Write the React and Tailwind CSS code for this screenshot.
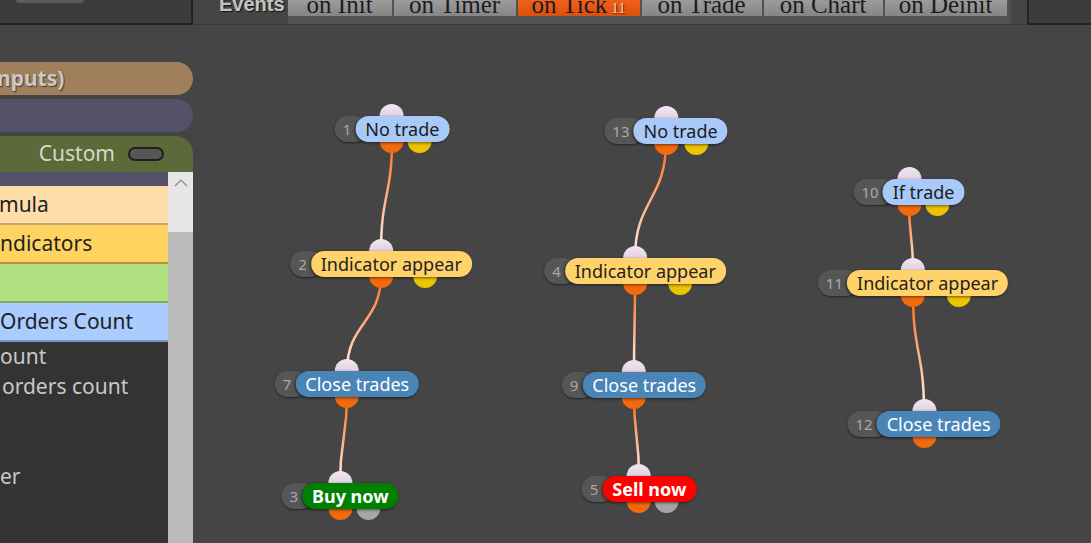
import React from 'react';

// strategy graph: blocks on the event canvas
const nodes = [
    { id: 1, cx: 392, y: 116, label: 'No trade', kind: 'cond', out2: 28 },
    { id: 13, cx: 666, y: 118, label: 'No trade', kind: 'cond', out2: 30 },
    { id: 10, cx: 909, y: 179, label: 'If trade', kind: 'cond', out2: 28 },
    { id: 2, cx: 381, y: 251, label: 'Indicator appear', kind: 'ind', out2: 44 },
    { id: 4, cx: 635, y: 258, label: 'Indicator appear', kind: 'ind', out2: 45 },
    { id: 11, cx: 913, y: 270, label: 'Indicator appear', kind: 'ind', out2: 46 },
    { id: 7, cx: 347, y: 371, label: 'Close trades', kind: 'close' },
    { id: 9, cx: 634, y: 372, label: 'Close trades', kind: 'close' },
    { id: 12, cx: 924, y: 411, label: 'Close trades', kind: 'close' },
    { id: 3, cx: 340, y: 483, label: 'Buy now', kind: 'buy', out2: 28 },
    { id: 5, cx: 639, y: 476, label: 'Sell now', kind: 'sell', out2: 28 },
];

const links = [
    [1, 2], [2, 7], [7, 3],
    [13, 4], [4, 9], [9, 5],
    [10, 11], [11, 12],
];

const labelStyles = {
    cond: 'bg-[#a9c9f9] text-[#1c1c1c]',
    ind: 'bg-[#ffd36a] text-[#222]',
    close: 'bg-[#4a85b8] text-white',
    buy: 'bg-[#008000] text-white font-bold',
    sell: 'bg-[#ff0000] text-white font-bold',
};

const tabs = [
    { name: 'on Init', w: 'w-[104px]' },
    { name: 'on Timer', w: 'w-[122px]' },
    { name: 'on Tick', w: 'w-[122px]', active: true, count: 11 },
    { name: 'on Trade', w: 'w-[120px]' },
    { name: 'on Chart', w: 'w-[119px]' },
    { name: 'on Deinit', w: 'w-[122px]' },
];

const byId = Object.fromEntries(nodes.map((n) => [n.id, n]));

const Node = ({ n }) => {
    const side = n.kind === 'buy' || n.kind === 'sell' ? 'bg-[#a6a6a6]' : 'bg-[#ecc400]';
    return (
        <div className="absolute -translate-x-1/2" style={{ left: n.cx, top: n.y }}>
            <div className="relative flex h-[26px]">
                <span className="absolute left-1/2 -ml-[12px] -top-[12px] w-[24px] h-[24px] rounded-full bg-gradient-to-b from-[#f2e6f2] to-[#d4bed4]" />
                <span className="absolute left-1/2 -ml-[12px] top-[13px] w-[24px] h-[24px] rounded-full bg-[#f36a0c]" />
                {n.out2 && (
                    <span
                        className={`absolute top-[13px] w-[24px] h-[24px] rounded-full ${side}`}
                        style={{ left: `calc(50% + ${n.out2 - 12}px)` }}
                    />
                )}
                <span className="relative flex items-center h-[26px] rounded-full bg-[#565656] pl-[8px] pr-[16px] text-[15px] text-[#a9a9a9] shadow-[0_1px_2px_rgba(0,0,0,0.5)]">
                    {n.id}
                </span>
                <span className={`relative -ml-[12px] flex items-center h-[26px] rounded-full px-[10px] text-[18px] whitespace-nowrap shadow-[-1px_1px_3px_rgba(0,0,0,0.55)] ${labelStyles[n.kind]}`}>
                    {n.label}
                </span>
            </div>
        </div>
    );
};

const Links = () => (
    <svg className="absolute left-0 top-0 pointer-events-none" width="1091" height="543">
        <defs>
            {links.map(([a, b]) => {
                const y1 = byId[a].y + 24;
                const y2 = byId[b].y;
                return (
                    <linearGradient key={`g${a}`} id={`link${a}`} gradientUnits="userSpaceOnUse" x1="0" y1={y1} x2="0" y2={y2}>
                        <stop offset="0" stopColor="#ff6a10" />
                        <stop offset="1" stopColor="#fff0ee" />
                    </linearGradient>
                );
            })}
        </defs>
        {links.map(([a, b]) => {
            const p = byId[a];
            const c = byId[b];
            const y1 = p.y + 24;
            const y2 = c.y;
            const m = (y2 - y1) / 2;
            return (
                <path
                    key={`${a}-${b}`}
                    d={`M${p.cx} ${y1} C${p.cx} ${y1 + m} ${c.cx} ${y2 - m} ${c.cx} ${y2}`}
                    fill="none"
                    stroke={`url(#link${a})`}
                    strokeWidth="2.5"
                />
            );
        })}
    </svg>
);

export default function App() {
    return (
        <div className="relative w-[1091px] h-[543px] overflow-hidden bg-[#454545] font-['Noto_Sans',sans-serif]">
            {/* event tabs */}
            <header className="flex h-[25px]">
                <div className="w-[193px] shrink-0 bg-[#3c3c3c] border-r-2 border-b-2 border-[#232323]">
                    <div className="ml-[16px] w-[68px] h-[3px] rounded-b-[3px] bg-[#5c5c5c]" />
                </div>
                <div className="flex-1 flex border-b border-[#3a3a3a]">
                    <div className="pl-[26px] pr-[3px] h-[24px] overflow-hidden">
                        <span className="block -mt-[6px] leading-[20px] text-[20px] font-bold text-[#c4c4c4] font-['Liberation_Sans',sans-serif] [text-shadow:1px_1px_1px_#111]">
                            Events
                        </span>
                    </div>
                    <div className="flex gap-[2px] h-[24px] pr-[4px] bg-[#525252]">
                        {tabs.map((t) => (
                            <div
                                key={t.name}
                                className={`${t.w} h-[16px] overflow-hidden flex justify-center ${t.active ? 'bg-gradient-to-b from-[#f0601c] to-[#d8500f]' : 'bg-gradient-to-b from-[#9c9c9c] to-[#858585]'}`}
                            >
                                <span className="block -mt-[8px] leading-[25px] text-[25px] text-[#1b1b1b] whitespace-nowrap font-['Liberation_Serif',serif]">
                                    {t.name}
                                    {t.count && (
                                        <span className="ml-[4px] text-[15px] text-[#f6c9a6] [text-shadow:1px_1px_1px_#5a2000]">{t.count}</span>
                                    )}
                                </span>
                            </div>
                        ))}
                    </div>
                </div>
                <div className="w-[64px] shrink-0 bg-[#3c3c3c] border-l-2 border-b-2 border-[#232323]" />
            </header>

            <div className="flex">
                {/* block palette */}
                <aside className="w-[193px] shrink-0 pt-[37px] flex flex-col">
                    <div className="h-[33px] rounded-r-[17px] bg-[#a07f5c] flex items-center">
                        <span className="-ml-[3px] text-[21px] font-bold text-[#c9c9c9] [text-shadow:1px_1px_1px_#4a3a2a]">nputs)</span>
                    </div>
                    <div className="mt-[4px] h-[33px] rounded-r-[17px] bg-[#555169]" />
                    <div className="mt-[4px] h-[36px] rounded-tr-[18px] bg-[#5b6a38] flex items-center justify-end pr-[29px] gap-[13px]">
                        <span className="text-[21px] text-[#d3dac6]">Custom</span>
                        <span className="w-[36px] h-[14px] rounded-full bg-[#565656] border-2 border-[#1f1f1f]" />
                    </div>
                    <div className="flex h-[371px]">
                        <div className="w-[168px] bg-[#333333] overflow-hidden text-[21px] whitespace-nowrap">
                            <div className="h-[14px] bg-[#555169]" />
                            <div className="h-[39px] flex items-center border-b-2 bg-[#ffdeaa] border-[#c8a472] text-[#222]">
                                <span className="-ml-[1px]">mula</span>
                            </div>
                            <div className="h-[39px] flex items-center border-b-2 bg-[#ffd35f] border-[#b8953c] text-[#222]">
                                <span>ndicators</span>
                            </div>
                            <div className="h-[39px] border-b-2 bg-[#b0e080] border-[#88a85a]" />
                            <div className="h-[39px] flex items-center border-b-2 bg-[#aaccff] border-[#7691c4] text-[#222]">
                                <span>Orders Count</span>
                            </div>
                            <div className="text-[#c8c8c8]">
                                <div className="h-[30px] flex items-center">ount</div>
                                <div className="h-[30px] flex items-center pl-[2px]">orders count</div>
                                <div className="h-[30px]" />
                                <div className="h-[30px]" />
                                <div className="h-[30px] flex items-center">er</div>
                            </div>
                        </div>
                        <div className="w-[25px] flex flex-col bg-[#bbbbbb]">
                            <div className="h-[60px] bg-[#e6e6e6] flex justify-center pt-[6px]">
                                <svg width="14" height="10" viewBox="0 0 14 10">
                                    <path d="M1 8 L7 2 L13 8" fill="none" stroke="#8a8a8a" strokeWidth="1.2" />
                                </svg>
                            </div>
                        </div>
                    </div>
                </aside>
            </div>

            <Links />
            {nodes.map((n) => (
                <Node key={n.id} n={n} />
            ))}
        </div>
    );
}
